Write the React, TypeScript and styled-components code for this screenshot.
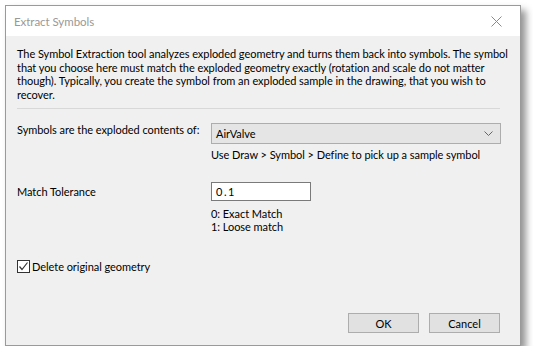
import React from 'react';
import styled, { createGlobalStyle } from 'styled-components';

const GlobalStyle = createGlobalStyle`
  body {
    margin: 0;
    background: #ffffff;
    font-family: Lato, "Liberation Sans", sans-serif;
    font-size: 11px;
    letter-spacing: -0.05px;
    color: #000;
  }
`;

const Window = styled.div`
  margin: 5px 0 0 5px;
  width: 516px;
  height: 341px;
  box-sizing: border-box;
  border: 1px solid #9a9a9a;
  background: #f0f0f0;
  display: flex;
  flex-direction: column;
  box-shadow: 5px 5px 7px rgba(0, 0, 0, 0.42);
`;

const TitleBar = styled.div`
  height: 30px;
  background: #ffffff;
  display: flex;
  align-items: center;
  justify-content: space-between;
  padding: 0 18px 0 8px;
`;

const Title = styled.span`
  color: #999999;
  font-size: 11.5px;
`;

const CloseButton = styled.svg`
  width: 11px;
  height: 11px;
`;

const Body = styled.div`
  flex: 1;
  display: flex;
  flex-direction: column;
  padding: 11px 20px 12px 11px;
`;

const Description = styled.div`
  line-height: 13.5px;
  white-space: nowrap;
`;

const Line = styled.div``;

const Separator = styled.hr`
  margin: 7px 0 14px;
  border: 0;
  border-top: 1px solid #d8d8d8;
`;

const FormRow = styled.div<{ $gap?: number }>`
  display: grid;
  grid-template-columns: 194px 290px;
  margin-top: ${(p) => p.$gap ?? 0}px;
  white-space: nowrap;
`;

const Label = styled.div<{ $offset?: number }>`
  line-height: 14px;
  padding-top: ${(p) => p.$offset ?? 0}px;
`;

const Field = styled.div`
  display: flex;
  flex-direction: column;
  align-items: flex-start;
`;

const Select = styled.div`
  width: 290px;
  height: 21px;
  box-sizing: border-box;
  border: 1px solid #adadad;
  background: #e5e5e5;
  display: flex;
  align-items: center;
  justify-content: space-between;
  padding: 0 7px 0 4px;
`;

const Chevron = styled.svg`
  width: 9px;
  height: 5px;
`;

const Input = styled.div`
  width: 100px;
  height: 19px;
  box-sizing: border-box;
  border: 1px solid #7a7a7a;
  background: #ffffff;
  display: flex;
  align-items: center;
  padding-left: 4px;
  letter-spacing: 1.5px;
`;

const Hint = styled.div<{ $top: number }>`
  margin-top: ${(p) => p.$top}px;
  line-height: 13px;
`;

const CheckRow = styled.label`
  display: flex;
  align-items: center;
  gap: 2px;
  margin-top: 27px;
`;

const CheckBox = styled.span`
  width: 13px;
  height: 13px;
  box-sizing: border-box;
  border: 1px solid #333333;
  background: #ffffff;
  display: flex;
  align-items: center;
  justify-content: center;
`;

const ButtonRow = styled.div`
  margin-top: auto;
  display: flex;
  justify-content: flex-end;
  gap: 10px;
`;

const Button = styled.button`
  width: 71px;
  height: 20px;
  box-sizing: border-box;
  border: 1px solid #adadad;
  background: #e1e1e1;
  font-family: inherit;
  font-size: 11px;
  color: #000;
  padding: 0;
`;

export default function App() {
  return (
    <>
      <GlobalStyle />
      <Window>
        <TitleBar>
          <Title>Extract Symbols</Title>
          <CloseButton viewBox="0 0 11 11">
            <path d="M0.5 0.5 L10.5 10.5 M10.5 0.5 L0.5 10.5" stroke="#8a8a8a" strokeWidth="1" fill="none" />
          </CloseButton>
        </TitleBar>
        <Body>
          <Description>
            <Line>The Symbol Extraction tool analyzes exploded geometry and turns them back into symbols. The symbol</Line>
            <Line>that you choose here must match the exploded geometry exactly (rotation and scale do not matter</Line>
            <Line>though). Typically, you create the symbol from an exploded sample in the drawing, that you wish to</Line>
            <Line>recover.</Line>
          </Description>
          <Separator />
          <FormRow>
            <Label>Symbols are the exploded contents of:</Label>
            <Field>
              <Select>
                <span>AirValve</span>
                <Chevron viewBox="0 0 9 5">
                  <path d="M0.5 0.5 L4.5 4.5 L8.5 0.5" stroke="#666" strokeWidth="1" fill="none" />
                </Chevron>
              </Select>
              <Hint $top={4}>Use Draw &gt; Symbol &gt; Define to pick up a sample symbol</Hint>
            </Field>
          </FormRow>
          <FormRow $gap={21}>
            <Label $offset={3}>Match Tolerance</Label>
            <Field>
              <Input>0.1</Input>
              <Hint $top={6}>
                0: Exact Match
                <br />
                1: Loose match
              </Hint>
            </Field>
          </FormRow>
          <CheckRow>
            <CheckBox>
              <svg width="11" height="11" viewBox="0 0 11 11">
                <path d="M1.5 5.5 L4 8.5 L9.5 1.5" stroke="#333" strokeWidth="1.2" fill="none" />
              </svg>
            </CheckBox>
            <span>Delete original geometry</span>
          </CheckRow>
          <ButtonRow>
            <Button>OK</Button>
            <Button>Cancel</Button>
          </ButtonRow>
        </Body>
      </Window>
    </>
  );
}
